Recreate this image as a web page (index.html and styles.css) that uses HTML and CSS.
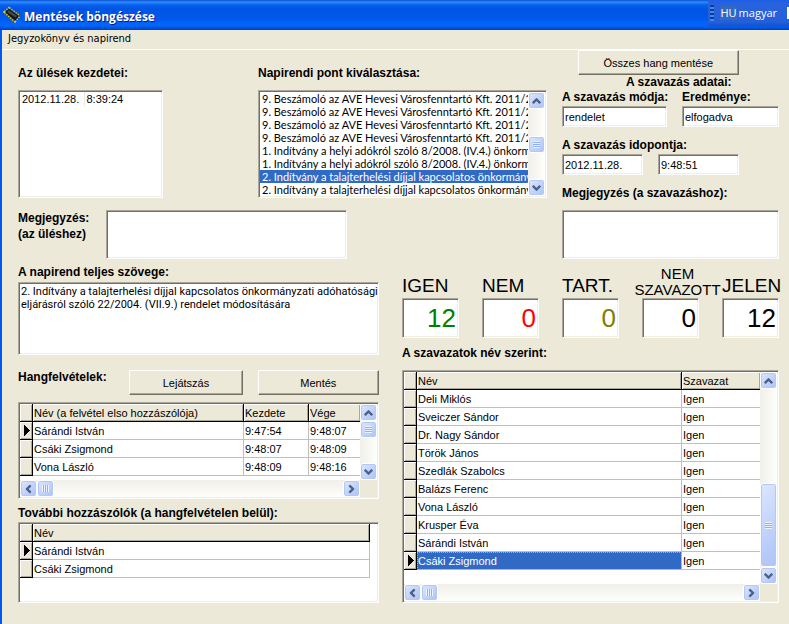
FILE: index.html
```
<!DOCTYPE html>
<html lang="hu">
<head>
    <meta charset="UTF-8">
    <meta name="viewport" content="width=device-width, initial-scale=1.0">
    <title>Mentések böngészése</title>
    <link rel="stylesheet" href="styles.css">
</head>
<body>
    <svg class="symbols" aria-hidden="true">
        <symbol id="arrow" viewBox="0 0 9 6">
            <path d="M0.8 5.2 L4.5 1.5 L8.2 5.2" fill="none" stroke="#4d6185" stroke-width="2.4"/>
        </symbol>
    </svg>

    <div class="window">
        <header class="titlebar">
            <svg class="chip" viewBox="0 0 16 16" aria-hidden="true">
                <path d="M1 5 L5 1.5 L15 9 L11 14 Z" fill="none" stroke="#d8c820" stroke-width="3" stroke-dasharray="1.4 1.2"/>
                <path d="M1 5 L5 1.5 L15 9 L11 14 Z" fill="#161616"/>
                <path d="M3 5 L5 3.2 L13 9 L11.5 10.5 Z" fill="#4a4a42"/>
            </svg>
            <h1>Mentések böngészése</h1>
            <div class="langbar">
                <span class="grip"></span>
                <span class="lang-code">HU</span>
                <span>magyar</span>
                <span class="lang-icon"></span>
            </div>
        </header>

        <nav class="menubar">
            <a href="#">Jegyzokönyv és napirend</a>
        </nav>

        <main>
            <section class="top">
                <div class="sessions">
                    <div class="pickers">
                        <div class="field">
                            <span class="caption">Az ülések kezdetei:</span>
                            <div class="sunken list">
                                <table class="dates">
                                    <tr><td>2012.11.28.</td><td>8:39:24</td></tr>
                                </table>
                            </div>
                        </div>
                        <div class="field">
                            <label for="agenda">Napirendi pont kiválasztása:</label>
                            <div class="sunken list with-scroll">
                                <select id="agenda" size="8">
                                    <option>9. Beszámoló az AVE Hevesi Városfenntartó Kft. 2011/2012</option>
                                    <option>9. Beszámoló az AVE Hevesi Városfenntartó Kft. 2011/2012</option>
                                    <option>9. Beszámoló az AVE Hevesi Városfenntartó Kft. 2011/2012</option>
                                    <option>9. Beszámoló az AVE Hevesi Városfenntartó Kft. 2011/2012</option>
                                    <option>1. Indítvány a helyi adókról szóló 8/2008. (IV.4.) önkormányzati</option>
                                    <option>1. Indítvány a helyi adókról szóló 8/2008. (IV.4.) önkormányzati</option>
                                    <option selected>2. Indítvány a talajterhelési díjjal kapcsolatos önkormányzati</option>
                                    <option>2. Indítvány a talajterhelési díjjal kapcsolatos önkormányzati</option>
                                </select>
                                <div class="scroll vertical">
                                    <button type="button" aria-label="Fel"><svg class="up"><use href="#arrow"/></svg></button>
                                    <span class="track"></span>
                                    <span class="thumb"></span>
                                    <span class="track"></span>
                                    <button type="button" aria-label="Le"><svg class="down"><use href="#arrow"/></svg></button>
                                </div>
                            </div>
                        </div>
                    </div>
                    <div class="note">
                        <label for="session-note">Megjegyzés:<br>(az üléshez)</label>
                        <textarea id="session-note" class="sunken"></textarea>
                    </div>
                </div>

                <div class="vote">
                    <button type="button" class="push save-all">Összes hang mentése</button>
                    <h2>A szavazás adatai:</h2>
                    <div class="vote-row">
                        <div class="field mode">
                            <label for="mode">A szavazás módja:</label>
                            <input id="mode" class="sunken" type="text" value="rendelet">
                        </div>
                        <div class="field outcome">
                            <label for="outcome">Eredménye:</label>
                            <input id="outcome" class="sunken" type="text" value="elfogadva">
                        </div>
                    </div>
                    <div class="field when">
                        <label for="vote-date">A szavazás idopontja:</label>
                        <div class="vote-row">
                            <input id="vote-date" class="sunken" type="text" value="2012.11.28.">
                            <input class="sunken" type="text" value="9:48:51" aria-label="Időpont">
                        </div>
                    </div>
                    <div class="field vote-note">
                        <label for="vote-note">Megjegyzés (a szavazáshoz):</label>
                        <textarea id="vote-note" class="sunken"></textarea>
                    </div>
                </div>
            </section>

            <section class="bottom">
                <div class="recordings">
                    <label for="full-text">A napirend teljes szövege:</label>
                    <textarea id="full-text" class="sunken">2. Indítvány a talajterhelési díjjal kapcsolatos önkormányzati adóhatósági eljárásról szóló 22/2004. (VII.9.) rendelet módosítására</textarea>

                    <div class="toolbar">
                        <h2>Hangfelvételek:</h2>
                        <button type="button" class="push">Lejátszás</button>
                        <button type="button" class="push">Mentés</button>
                    </div>

                    <div class="sunken grid audio">
                        <div class="cells">
                            <table>
                                <colgroup><col class="mark"><col><col class="start"><col class="end"></colgroup>
                                <thead>
                                    <tr><th></th><th>Név (a felvétel elso hozzászólója)</th><th>Kezdete</th><th>Vége</th></tr>
                                </thead>
                                <tbody>
                                    <tr class="current"><th></th><td>Sárándi István</td><td>9:47:54</td><td>9:48:07</td></tr>
                                    <tr><th></th><td>Csáki Zsigmond</td><td>9:48:07</td><td>9:48:09</td></tr>
                                    <tr><th></th><td>Vona László</td><td>9:48:09</td><td>9:48:16</td></tr>
                                </tbody>
                            </table>
                        </div>
                        <div class="scroll vertical">
                            <button type="button" aria-label="Fel"><svg class="up"><use href="#arrow"/></svg></button>
                            <span class="thumb"></span>
                            <span class="track"></span>
                            <button type="button" aria-label="Le"><svg class="down"><use href="#arrow"/></svg></button>
                        </div>
                        <div class="scroll horizontal">
                            <button type="button" aria-label="Balra"><svg class="left"><use href="#arrow"/></svg></button>
                            <span class="thumb"></span>
                            <span class="track"></span>
                            <button type="button" aria-label="Jobbra"><svg class="right"><use href="#arrow"/></svg></button>
                        </div>
                    </div>

                    <h2>További hozzászólók (a hangfelvételen belül):</h2>
                    <div class="sunken grid speakers">
                        <div class="cells">
                            <table>
                                <colgroup><col class="mark"><col></colgroup>
                                <thead>
                                    <tr><th></th><th>Név</th></tr>
                                </thead>
                                <tbody>
                                    <tr class="current"><th></th><td>Sárándi István</td></tr>
                                    <tr><th></th><td>Csáki Zsigmond</td></tr>
                                </tbody>
                            </table>
                        </div>
                    </div>
                </div>

                <div class="results">
                    <div class="counts">
                        <div class="count">
                            <label for="yes">IGEN</label>
                            <input id="yes" class="sunken green" type="text" value="12">
                        </div>
                        <div class="count">
                            <label for="no">NEM</label>
                            <input id="no" class="sunken red" type="text" value="0">
                        </div>
                        <div class="count">
                            <label for="abstain">TART.</label>
                            <input id="abstain" class="sunken olive" type="text" value="0">
                        </div>
                        <div class="count small">
                            <label for="absent">NEM<br>SZAVAZOTT</label>
                            <input id="absent" class="sunken" type="text" value="0">
                        </div>
                        <div class="count">
                            <label for="present">JELEN</label>
                            <input id="present" class="sunken" type="text" value="12">
                        </div>
                    </div>

                    <h2>A szavazatok név szerint:</h2>
                    <div class="sunken grid votes">
                        <div class="cells">
                            <table>
                                <colgroup><col class="mark"><col><col class="ballot"></colgroup>
                                <thead>
                                    <tr><th></th><th>Név</th><th>Szavazat</th></tr>
                                </thead>
                                <tbody>
                                    <tr><th></th><td>Deli Miklós</td><td>Igen</td></tr>
                                    <tr><th></th><td>Sveiczer Sándor</td><td>Igen</td></tr>
                                    <tr><th></th><td>Dr. Nagy Sándor</td><td>Igen</td></tr>
                                    <tr><th></th><td>Török János</td><td>Igen</td></tr>
                                    <tr><th></th><td>Szedlák Szabolcs</td><td>Igen</td></tr>
                                    <tr><th></th><td>Balázs Ferenc</td><td>Igen</td></tr>
                                    <tr><th></th><td>Vona László</td><td>Igen</td></tr>
                                    <tr><th></th><td>Krusper Éva</td><td>Igen</td></tr>
                                    <tr><th></th><td>Sárándi István</td><td>Igen</td></tr>
                                    <tr class="current"><th></th><td class="selected">Csáki Zsigmond</td><td>Igen</td></tr>
                                </tbody>
                            </table>
                        </div>
                        <div class="scroll vertical">
                            <button type="button" aria-label="Fel"><svg class="up"><use href="#arrow"/></svg></button>
                            <span class="track"></span>
                            <span class="thumb long"></span>
                            <button type="button" aria-label="Le"><svg class="down"><use href="#arrow"/></svg></button>
                        </div>
                        <div class="scroll horizontal">
                            <button type="button" aria-label="Balra"><svg class="left"><use href="#arrow"/></svg></button>
                            <span class="thumb"></span>
                            <span class="track"></span>
                            <button type="button" aria-label="Jobbra"><svg class="right"><use href="#arrow"/></svg></button>
                        </div>
                    </div>
                </div>
            </section>
        </main>
    </div>
</body>
</html>
```
FILE: styles.css
```
* {
    box-sizing: border-box;
}

body {
    margin: 0;
    font-family: "Liberation Sans", Arial, sans-serif;
    font-size: 11px;
    line-height: 14px;
    color: #000000;
    background-color: #ece9d8;
}

.symbols {
    display: none;
}

.window {
    min-height: 100vh;
    border-left: 2px solid #0058ee;
}

/* title bar */
.titlebar {
    display: flex;
    align-items: center;
    height: 30px;
    margin-left: -2px;
    padding-left: 4px;
    background: linear-gradient(#0a50d0 0, #2e8cff 2px, #0660ee 5px, #0054e3 9px, #0058ea 18px, #0068ff 25px, #005cf0 27px, #003fb8 30px);
}

.chip {
    width: 16px;
    height: 16px;
    overflow: visible;
}

h1 {
    flex: 1;
    margin: 0;
    padding: 4px 0 0 4px;
    font-family: "Open Sans", "Noto Sans", sans-serif;
    font-size: 12px;
    font-weight: bold;
    color: #ffffff;
    text-shadow: 1px 1px #0a1883;
}

.langbar {
    display: flex;
    align-items: center;
    align-self: flex-start;
    gap: 2px;
    height: 26px;
    font-family: "Open Sans", "Noto Sans", sans-serif;
    color: #ffffff;
    background: linear-gradient(#1c5fe8, #2a62dc 4px, #2260dc 22px, #1c50c0);
}

.grip {
    width: 4px;
    height: 16px;
    margin: 0 4px 0 2px;
    background: repeating-linear-gradient(#0c3c94 0 2px, #3f8cf0 2px 4px);
}

.lang-code {
    background-color: #316ac5;
}

.lang-icon {
    width: 2px;
    height: 12px;
    margin-left: 8px;
    background-color: #ffffff;
}

.menubar {
    height: 20px;
    padding: 2px 6px;
    border-bottom: 1px solid #ffffff;
    font-family: "DejaVu Sans Condensed", "Noto Sans", sans-serif;
}

.menubar a {
    color: #000000;
    text-decoration: none;
}

/* shared parts */
main {
    padding: 0 10px 20px 16px;
}

label,
h2,
.caption {
    display: block;
    margin: 0;
    font-size: 12px;
    font-weight: bold;
    white-space: nowrap;
}

.sunken {
    padding: 1px;
    border: 1px solid;
    border-color: #aca899 #ffffff #ffffff #aca899;
    border-radius: 0;
    background-color: #ffffff;
    box-shadow: inset 1px 1px #716f64, inset -1px -1px #f1efe2;
    outline: none;
}

input,
textarea,
select {
    display: block;
    width: 100%;
    margin: 0;
    font: inherit;
    color: inherit;
}

input.sunken,
textarea.sunken {
    padding: 2px;
}

textarea {
    resize: none;
    overflow: hidden;
}

input {
    height: 21px;
}

.push {
    height: 25px;
    padding: 0;
    border: 1px solid;
    border-color: #ffffff #716f64 #716f64 #ffffff;
    background-color: #ece9d8;
    box-shadow: inset -1px -1px #aca899;
    font: inherit;
    color: inherit;
}

/* upper half */
.top {
    display: grid;
    grid-template-columns: 529fr 217fr;
    gap: 15px;
}

.sessions {
    padding-top: 16px;
}

.pickers {
    display: grid;
    grid-template-columns: 145fr 289fr;
    gap: 95px;
}

.list {
    height: 108px;
    margin-top: 10px;
}

.with-scroll {
    display: flex;
}

.dates {
    border-collapse: collapse;
}

.dates td {
    padding: 1px 2px;
    line-height: 12px;
}

.dates td + td {
    border-left: 1px solid #ece9d8;
}

.dates td:first-child {
    width: 64px;
}

#agenda {
    flex: 1;
    min-width: 0;
    height: 104px;
    padding: 0;
    border: none;
    background: none;
    font-family: Lato, Arial, sans-serif;
    overflow: hidden;
    outline: none;
}

#agenda option {
    min-height: 13px;
    padding: 0 2px;
    line-height: 13px;
}

#agenda option:checked {
    background: linear-gradient(#316ac5, #316ac5);
    -webkit-text-fill-color: #ffffff;
}

.note {
    display: flex;
    margin-top: 12px;
}

.note label {
    width: 88px;
    line-height: 16px;
}

.note textarea {
    width: 241px;
    height: 49px;
}

.save-all {
    display: block;
    width: 74%;
    margin-left: 16px;
}

.vote h2 {
    padding: 0 0 1px 64px;
}

.vote-row {
    display: flex;
    gap: 15px;
}

.mode {
    flex: 105;
    min-width: 0;
}

.outcome {
    flex: 97;
}

.vote .field input {
    margin-top: 2px;
}

.when,
.vote-note {
    margin-top: 11px;
}

.when input {
    width: 81px;
}

.vote-note textarea {
    height: 49px;
    margin-top: 10px;
}

/* lower half */
.bottom {
    display: grid;
    grid-template-columns: 361fr 377fr;
    gap: 23px;
    padding-top: 6px;
}

#full-text {
    height: 73px;
    margin-top: 3px;
    padding-right: 0;
    font-family: Roboto, Arial, sans-serif;
    line-height: 13px;
}

.toolbar {
    display: grid;
    grid-template-columns: 96fr 113fr 121fr;
    gap: 15px;
    margin: 15px 0 7px;
}

.grid {
    display: grid;
    grid-template-columns: 1fr 17px;
    grid-template-rows: 1fr 17px;
}

.audio {
    height: 97px;
    margin-bottom: 7px;
}

.speakers {
    height: 81px;
    margin-top: 2px;
    grid-template: 1fr / 1fr;
    padding-right: 8px;
}

.votes {
    height: 233px;
    margin-top: 10px;
}

.audio,
.votes {
    background-image: linear-gradient(#ece9d8, #ece9d8);
    background-position: right bottom;
    background-size: 18px 18px;
    background-repeat: no-repeat;
}

.cells {
    min-height: 0;
    overflow: hidden;
}

.grid table {
    width: 100%;
    table-layout: fixed;
    border-collapse: separate;
    border-spacing: 0;
}

.mark {
    width: 13px;
}

.start {
    width: 65px;
}

.end {
    width: 51px;
}

.ballot {
    width: 78px;
}

.grid th,
.grid td {
    height: 18px;
    padding: 2px 1px 0;
    border: 0 solid #c0c0c0;
    border-width: 0 1px 1px 0;
    line-height: 15px;
    font-weight: normal;
    text-align: left;
    white-space: nowrap;
}

.grid th {
    border-color: #000000;
    background-color: #ece9d8;
    box-shadow: inset 1px 1px #ffffff, inset -1px -1px #aca899;
}

.audio th:last-child:not(:first-child),
.audio td:last-child,
.votes th:last-child:not(:first-child),
.votes td:last-child {
    border-right: none;
}

/* row pointer */
.grid .current th {
    background-image: conic-gradient(from 225deg at 100% 50%, #000000 90deg, transparent 0);
    background-size: 6px 11px;
    background-position: 4px 3px;
    background-repeat: no-repeat;
}

.grid .selected {
    color: #ffffff;
    background-color: #316ac5;
    outline: 1px dotted #e8a33c;
    outline-offset: -1px;
}

/* scroll bars */
.scroll {
    display: flex;
}

.vertical {
    flex-direction: column;
    width: 17px;
    background: linear-gradient(to right, #f0efe9, #fefefb);
}

.horizontal {
    background: linear-gradient(#f0efe9, #fefefb);
}

.scroll button,
.thumb {
    display: flex;
    flex: none;
    align-items: center;
    justify-content: center;
    width: 17px;
    height: 17px;
    padding: 0;
    border: 1px solid #ffffff;
    border-radius: 3px;
    background: linear-gradient(135deg, #dce6ff, #bacdf9 70%, #aec4f6);
    box-shadow: inset 0 0 0 1px #b4c8f6;
}

.scroll svg {
    width: 9px;
    height: 6px;
}

.down {
    transform: rotate(180deg);
}

.left {
    transform: rotate(-90deg);
}

.right {
    transform: rotate(90deg);
}

.thumb::before {
    content: "";
    width: 7px;
    height: 7px;
    background: repeating-linear-gradient(#eef4fe 0 1px, #8cb0f8 1px 2px);
}

.horizontal .thumb::before {
    background: repeating-linear-gradient(to right, #eef4fe 0 1px, #8cb0f8 1px 2px);
}

.thumb.long {
    height: 84px;
}

.track {
    flex: 1;
}

/* vote counts */
.counts {
    display: flex;
    justify-content: space-between;
    height: 73px;
}

.count {
    display: flex;
    flex-direction: column;
    justify-content: flex-end;
    width: 57px;
}

.count label {
    font-size: 19px;
    font-weight: normal;
    line-height: 24px;
}

.small label {
    align-self: center;
    padding-left: 14px;
    font-size: 15px;
    line-height: 16px;
    text-align: center;
}

.count input {
    height: 40px;
    font-size: 26px;
    text-align: right;
}

.green {
    color: #008000;
}

.red {
    color: #ff0000;
}

.olive {
    color: #808000;
}

.counts + h2 {
    margin-top: 8px;
}
```
